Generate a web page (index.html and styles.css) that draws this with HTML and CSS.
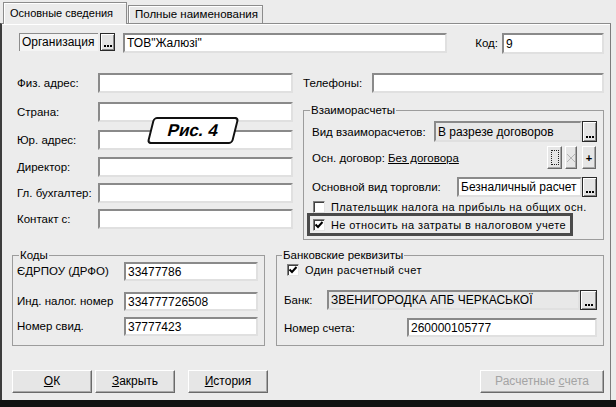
FILE: index.html
```html
<!DOCTYPE html>
<html lang="ru">
<head>
    <meta charset="UTF-8">
    <meta name="viewport" content="width=device-width, initial-scale=1.0">
    <title>Контрагент</title>
    <link rel="stylesheet" href="styles.css">
</head>
<body>
    <div class="window">
        <div class="tabs">
            <div class="tab active">Основные сведения</div>
            <div class="tab">Полные наименования</div>
        </div>

        <div class="panel">
            <div class="org-row">
                <span class="org-kind">Организация</span>
                <span class="btn-dots"><i></i></span>
                <span class="field org-name">ТОВ"Жалюзі"</span>
                <span class="code-label">Код:</span>
                <span class="field code">9</span>
            </div>

            <div class="main">
                <div class="address">
                    <span class="label">Физ. адрес:</span><span class="field"></span>
                    <span class="label">Страна:</span><span class="field"></span>
                    <span class="label">Юр. адрес:</span><span class="field"></span>
                    <span class="label">Директор:</span><span class="field"></span>
                    <span class="label">Гл. бухгалтер:</span><span class="field"></span>
                    <span class="label">Контакт с:</span><span class="field"></span>
                </div>

                <div class="side">
                    <div class="phones">
                        <span class="label">Телефоны:</span>
                        <span class="field"></span>
                    </div>

                    <fieldset class="group settle">
                        <legend>Взаиморасчеты</legend>
                        <div class="row kind">
                            <span class="label">Вид взаиморасчетов:</span>
                            <span class="field grey">В разрезе договоров</span>
                            <span class="btn-dots"><i></i></span>
                        </div>
                        <div class="row contract">
                            <span class="label">Осн. договор: <u>Без договора</u></span>
                            <span class="btn-icon pick"><i></i></span>
                            <span class="btn-icon clear">
                                <svg width="10" height="12" viewBox="0 0 10 12"><path d="M1 2 L9 10 M9 2 L1 10" stroke="#b4b4b4" stroke-width="1" fill="none"/></svg>
                            </span>
                            <span class="btn-icon add">+</span>
                        </div>
                        <div class="row trade">
                            <span class="label">Основной вид торговли:</span>
                            <span class="field">Безналичный расчет</span>
                            <span class="btn-dots"><i></i></span>
                        </div>
                        <div class="check first">
                            <span class="box"></span>
                            <span>Плательщик налога на прибыль на общих осн.</span>
                        </div>
                        <div class="check focused">
                            <span class="box">
                                <svg width="10" height="10" viewBox="0 0 10 10"><path d="M1.5 4.5 L4 7 L8.5 2" stroke="#000" stroke-width="2" fill="none"/></svg>
                            </span>
                            <span>Не относить на затраты в налоговом учете</span>
                        </div>
                    </fieldset>
                </div>
            </div>

            <div class="groups">
                <fieldset class="group codes">
                    <legend>Коды</legend>
                    <div class="codes-grid">
                        <span class="label">ЄДРПОУ (ДРФО)</span><span class="field">33477786</span>
                        <span class="label">Инд. налог. номер</span><span class="field">334777726508</span>
                        <span class="label">Номер свид.</span><span class="field">37777423</span>
                    </div>
                </fieldset>

                <fieldset class="group bank">
                    <legend>Банковские реквизиты</legend>
                    <div class="check single">
                        <span class="box">
                            <svg width="10" height="10" viewBox="0 0 10 10"><path d="M1.5 4.5 L4 7 L8.5 2" stroke="#000" stroke-width="2" fill="none"/></svg>
                        </span>
                        <span>Один расчетный счет</span>
                    </div>
                    <div class="row bank-name">
                        <span class="label">Банк:</span>
                        <span class="field grey">ЗВЕНИГОРОДКА АПБ ЧЕРКАСЬКОЇ</span>
                        <span class="btn-dots"><i></i></span>
                    </div>
                    <div class="row account">
                        <span class="label">Номер счета:</span>
                        <span class="field">260000105777</span>
                    </div>
                </fieldset>
            </div>

            <div class="actions">
                <span class="btn ok"><u>О</u>К</span>
                <span class="btn close"><u>З</u>акрыть</span>
                <span class="btn history"><u>И</u>стория</span>
                <span class="btn accounts disabled">Расчетные <u>с</u>чета</span>
            </div>

            <div class="callout"><span>Рис. 4</span></div>
        </div>

        <div class="statusbar"></div>
    </div>
</body>
</html>
```

FILE: styles.css
```css
* {
    box-sizing: border-box;
}
body {
    margin: 0;
    background: #ececec;
    font-family: "Liberation Sans", Arial, sans-serif;
    font-size: 11.5px;
    color: #000;
}
.window {
    width: 616px;
    height: 407px;
    display: flex;
    flex-direction: column;
    background: #ececec;
    overflow: hidden;
}

/* tab strip */
.tabs {
    height: 24px;
    display: flex;
    align-items: flex-end;
    padding-left: 3px;
    position: relative;
    z-index: 1;
}
.tab {
    width: 135px;
    height: 18px;
    margin: 0 0 1px 1px;
    padding: 0 6px;
    line-height: 17px;
    font-size: 11.5px;
    white-space: nowrap;
    border: 1px solid #8c8c8c;
    border-bottom: none;
    box-shadow: inset 1px 1px #fff;
    background: #e8e8e8;
}
.tab.active {
    width: 124px;
    height: 22px;
    margin: 0;
    line-height: 21px;
    font-size: 11px;
    background: #ececec;
}

/* page frame */
.panel {
    flex: 1;
    width: 611px;
    margin-top: -1px;
    padding: 9px 0 0 10px;
    border-left: 2px solid #3c3c3c;
    border-top: 1px solid #8c8c8c;
    border-right: 1px solid #7c7c7c;
    box-shadow: inset 0 1px #fff;
    position: relative;
}
.statusbar {
    height: 7px;
    background: #111;
}

/* inputs and buttons */
.field {
    display: flex;
    align-items: center;
    height: 20px;
    padding: 0 2px;
    background: #fff;
    border: 2px solid;
    border-color: #8a8a8a #e0e0e0 #e0e0e0 #8a8a8a;
    white-space: nowrap;
    overflow: hidden;
    font-size: 12px;
}
.field.grey {
    background: #e8e8e8;
}
.label {
    white-space: nowrap;
}
.btn-dots {
    display: flex;
    align-items: flex-end;
    width: 15px;
    height: 20px;
    padding: 0 0 3px 3px;
    border: 1px solid #2a2a2a;
    box-shadow: inset 1px 1px #fff, inset -1px -1px #8a8a8a;
    background: #e4e4e4;
}
/* three dots of the "..." button */
.btn-dots i {
    width: 2px;
    height: 2px;
    background: #000;
    box-shadow: 3px 0 #000, 6px 0 #000;
}
.btn-icon {
    display: flex;
    align-items: center;
    justify-content: center;
    height: 23px;
    border: 1px solid;
    border-color: #fff #6a6a6a #6a6a6a #fff;
    box-shadow: inset -1px -1px #a8a8a8;
    background: #e6e6e6;
}
.btn-icon.pick {
    width: 15px;
}
.btn-icon.pick i {
    width: 8px;
    height: 15px;
    border: 1px dotted #222;
}
.btn-icon.clear {
    width: 12px;
    margin-left: 3px;
}
.btn-icon.add {
    width: 14px;
    margin: 0 1px 0 5px;
    font-weight: bold;
    font-size: 11px;
}

/* checkboxes */
.check {
    display: flex;
    align-items: center;
    font-size: 11px;
    letter-spacing: 0.4px;
    white-space: nowrap;
}
.box {
    display: flex;
    align-items: center;
    justify-content: center;
    flex: none;
    width: 12px;
    height: 12px;
    margin-right: 6px;
    background: #fff;
    border: 1px solid;
    border-color: #808080 #e4e4e4 #e4e4e4 #808080;
    box-shadow: inset 1px 1px #404040;
}

/* top row */
.org-row {
    display: flex;
    align-items: flex-start;
    width: 585px;
    height: 20px;
    margin-left: 7px;
}
.org-kind {
    width: 79px;
    height: 18px;
    padding-left: 2px;
    line-height: 17px;
    font-size: 12px;
    white-space: nowrap;
    border-left: 1px solid #8c8c8c;
    border-top: 1px solid #8c8c8c;
    background: #f4f4f4;
}
.org-row .btn-dots {
    height: 18px;
    margin-left: 2px;
}
.org-name {
    width: 324px;
    margin-left: 8px;
}
.code-label {
    margin: 0 4px 0 auto;
    line-height: 20px;
}
.code {
    width: 102px;
    height: 21px;
}

/* address block and settlements */
.main {
    display: flex;
    margin-top: 20px;
}
.address {
    display: grid;
    grid-template-columns: 81px 195px;
    grid-template-rows: 29px 28px 27px 26px 26px 20px;
    align-items: start;
    margin-left: 5px;
}
.address .label {
    line-height: 20px;
}
.side {
    width: 301px;
    margin-left: 10px;
}
.phones {
    display: flex;
}
.phones .label {
    width: 69px;
    line-height: 20px;
}
.phones .field {
    width: 232px;
}

.group {
    margin: 0;
    padding: 0;
    min-width: 0;
    border: 1px solid #9c9c9c;
}
.group legend {
    padding: 0 1px;
    line-height: 14px;
}
.settle {
    width: 301px;
    height: 137px;
    margin-top: 10px;
    padding: 4px 6px 0 8px;
}
.settle legend {
    margin-left: -2px;
}
.row {
    display: flex;
    align-items: center;
}
.row .label {
    flex: 1;
}
.kind {
    height: 21px;
}
.kind .field {
    width: 148px;
    height: 21px;
}
.kind .btn-dots {
    height: 21px;
}
.contract {
    height: 23px;
    margin-top: 4px;
}
.trade {
    height: 20px;
    margin-top: 8px;
}
.trade .field {
    width: 125px;
}
.check.first {
    height: 12px;
    margin: 4px 0 0 1px;
}
.check.focused {
    width: 266px;
    height: 23px;
    margin-left: -5px;
    padding-left: 3px;
    border: 3px solid #4a4a4a;
}

/* codes and bank */
.groups {
    display: flex;
    margin-top: 8px;
}
.codes {
    width: 253px;
    height: 98px;
    padding: 0 4px;
}
.codes legend {
    margin-left: 2px;
}
.codes-grid {
    display: grid;
    grid-template-columns: 107px 134px;
    grid-template-rows: 30px 25px 19px;
    align-items: start;
}
.codes-grid .label {
    line-height: 19px;
}
.codes-grid .field {
    height: 19px;
}
.bank {
    width: 328px;
    height: 98px;
    margin-left: 11px;
    padding: 2px 6px 0 7px;
}
.bank legend {
    margin-left: -2px;
}
.check.single {
    height: 12px;
    margin-left: 3px;
}
.bank-name {
    height: 20px;
    margin-top: 14px;
}
.bank-name .field {
    width: 253px;
}
.bank-name .btn-dots {
    width: 17px;
    padding-left: 4px;
}
.account {
    height: 19px;
    margin-top: 8px;
}
.account .field {
    width: 190px;
    height: 19px;
}

/* dialog buttons */
.actions {
    display: flex;
    margin: 24px 0 0 0;
}
.btn {
    width: 80px;
    height: 23px;
    line-height: 21px;
    text-align: center;
    font-size: 12px;
    border: 1px solid;
    border-color: #fff #6a6a6a #6a6a6a #fff;
    box-shadow: inset -1px -1px #a8a8a8;
    background: #e6e6e6;
}
.btn.close {
    margin-left: 3px;
}
.btn.history {
    margin-left: 13px;
}
.btn.accounts {
    width: 124px;
    margin-left: 212px;
}
.btn.disabled {
    color: #a4a4a4;
}

/* figure label drawn over the form */
.callout {
    position: absolute;
    left: 148px;
    top: 93px;
    width: 86px;
    height: 27px;
    display: flex;
    align-items: center;
    justify-content: center;
    border: 2px solid #111;
    border-radius: 4px;
    background: #fff;
    transform: skewX(-14deg);
}
.callout span {
    font-size: 17px;
    font-weight: bold;
}
```
